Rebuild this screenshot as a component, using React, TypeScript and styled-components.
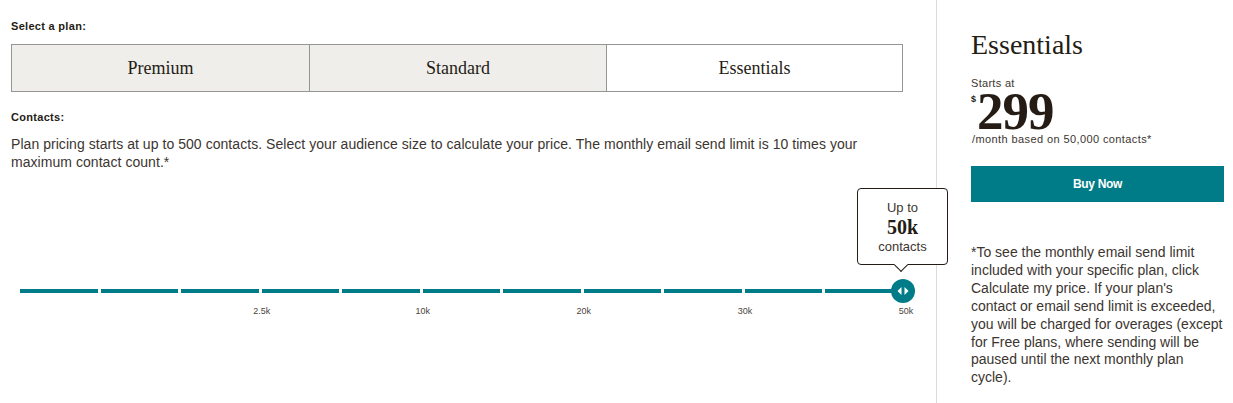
import React from "react";
import styled, { createGlobalStyle } from "styled-components";

const GlobalStyle = createGlobalStyle`
  body {
    margin: 0;
    background: #fff;
    color: #241c15;
    font-family: "Liberation Sans", Arial, sans-serif;
  }
`;

const teal = "#007c89";
const serif = `"Liberation Serif", "Times New Roman", serif`;

const Page = styled.div`
  display: flex;
  width: 1233px;
  height: 403px;
  overflow: hidden;
`;

const LeftColumn = styled.div`
  padding: 20px 0 0 11px;
  border-right: 1px solid #dedbd5;
  box-sizing: border-box;
  flex: 0 0 937px;
`;

const Label = styled.div`
  font-size: 11px;
  font-weight: 600;
  letter-spacing: 0.3px;
  margin-bottom: 12px;
`;

const Tabs = styled.div`
  display: grid;
  grid-template-columns: 297px 297px 1fr;
  width: 892px;
  height: 48px;
  border: 1px solid #959595;
  box-sizing: border-box;
`;

const Tab = styled.div<{ $active?: boolean; $first?: boolean }>`
  display: flex;
  align-items: center;
  justify-content: center;
  font-family: ${serif};
  font-size: 18px;
  background: ${(p) => (p.$active ? "#fff" : "#efeeea")};
  border-left: ${(p) => (p.$first ? "none" : "1px solid #959595")};
`;

const ContactsLabel = styled(Label)`
  margin-top: 19px;
  margin-bottom: 12px;
`;

const Description = styled.p`
  margin: 0;
  font-size: 14px;
  line-height: 18px;
  letter-spacing: 0.05px;
  width: 870px;
  color: #3c3530;
`;

const Slider = styled.div`
  position: relative;
  margin: 118px 0 0 9px;
  width: 883px;
`;

const Track = styled.div`
  display: flex;
  gap: 3px;
  height: 4px;
`;

const Segment = styled.div`
  flex: 1;
  background: ${teal};
`;

const Ticks = styled.div`
  display: flex;
  gap: 3px;
  margin-top: 13px;
  height: 14px;
`;

const Tick = styled.div`
  flex: 1;
  position: relative;
  font-size: 9px;
  color: #4a4540;
  span {
    position: absolute;
    right: -3px;
    transform: translateX(50%);
    top: 0;
  }
`;

const Knob = styled.div`
  position: absolute;
  right: -12px;
  top: -10px;
  width: 24px;
  height: 24px;
  border-radius: 50%;
  background: ${teal};
  display: flex;
  align-items: center;
  justify-content: center;
`;

const Bubble = styled.div`
  position: absolute;
  left: 837px;
  top: -101px;
  width: 91px;
  height: 77px;
  box-sizing: border-box;
  border: 1px solid #241c15;
  border-radius: 4px;
  background: #fff;
  display: flex;
  flex-direction: column;
  align-items: center;
  justify-content: center;
  font-size: 13px;
  line-height: 17px;
  color: #3c3530;
  &::after {
    content: "";
    position: absolute;
    left: 38px;
    bottom: -6px;
    width: 9px;
    height: 9px;
    background: #fff;
    border-right: 1px solid #241c15;
    border-bottom: 1px solid #241c15;
    transform: rotate(45deg);
  }
`;

const BubbleValue = styled.div`
  font-family: ${serif};
  font-weight: 700;
  font-size: 20px;
  line-height: 22px;
  color: #241c15;
`;

const RightColumn = styled.div`
  flex: 1;
  padding: 30px 0 0 34px;
`;

const PlanName = styled.h2`
  margin: 0;
  font-family: ${serif};
  font-weight: 400;
  font-size: 28px;
  line-height: 30px;
`;

const Small = styled.div`
  font-size: 11px;
  letter-spacing: 0.3px;
  color: #3c3530;
`;

const StartsAt = styled(Small)`
  margin-top: 17px;
  line-height: 13px;
`;

const Price = styled.div`
  display: flex;
  align-items: flex-start;
  height: 43px;
`;

const Dollar = styled.span`
  font-size: 9px;
  font-weight: 700;
  line-height: 10px;
  margin-top: 4px;
  margin-right: 1px;
`;

const Amount = styled.span`
  font-family: ${serif};
  font-weight: 700;
  font-size: 53px;
  line-height: 43px;
  letter-spacing: -1px;
`;

const PerMonth = styled(Small)`
  margin-left: 1px;
  line-height: 13px;
  letter-spacing: 0.4px;
`;

const BuyButton = styled.button`
  margin-top: 20px;
  width: 253px;
  height: 36px;
  border: none;
  background: ${teal};
  color: #fff;
  font-family: "Liberation Sans", Arial, sans-serif;
  font-weight: 700;
  font-size: 12px;
  letter-spacing: -0.3px;
  cursor: pointer;
`;

const Footnote = styled.p`
  margin: 42px 0 0;
  font-size: 14px;
  line-height: 17.9px;
  white-space: nowrap;
  color: #3c3530;
`;

const ticks = ["", "", "2.5k", "", "10k", "", "20k", "", "30k", "", "50k"];

const footnoteLines = [
  "*To see the monthly email send limit",
  "included with your specific plan, click",
  "Calculate my price. If your plan's",
  "contact or email send limit is exceeded,",
  "you will be charged for overages (except",
  "for Free plans, where sending will be",
  "paused until the next monthly plan",
  "cycle).",
];

export default function App() {
  return (
    <>
      <GlobalStyle />
      <Page>
        <LeftColumn>
          <Label>Select a plan:</Label>
          <Tabs>
            <Tab $first>Premium</Tab>
            <Tab>Standard</Tab>
            <Tab $active>Essentials</Tab>
          </Tabs>
          <ContactsLabel>Contacts:</ContactsLabel>
          <Description>
            Plan pricing starts at up to 500 contacts. Select your audience size to calculate your
            price. The monthly email send limit is 10 times your maximum contact count.*
          </Description>
          <Slider>
            <Bubble>
              <div>Up to</div>
              <BubbleValue>50k</BubbleValue>
              <div>contacts</div>
            </Bubble>
            <Track>
              {ticks.map((_, i) => (
                <Segment key={i} />
              ))}
            </Track>
            <Knob>
              <svg width="12" height="10" viewBox="0 0 12 10">
                <polygon points="4.5,1 4.5,9 0.5,5" fill="#fff" />
                <polygon points="7.5,1 7.5,9 11.5,5" fill="#fff" />
              </svg>
            </Knob>
            <Ticks>
              {ticks.map((t, i) => (
                <Tick key={i}>{t && <span>{t}</span>}</Tick>
              ))}
            </Ticks>
          </Slider>
        </LeftColumn>
        <RightColumn>
          <PlanName>Essentials</PlanName>
          <StartsAt>Starts at</StartsAt>
          <Price>
            <Dollar>$</Dollar>
            <Amount>299</Amount>
          </Price>
          <PerMonth>/month based on 50,000 contacts*</PerMonth>
          <BuyButton>Buy Now</BuyButton>
          <Footnote>
            {footnoteLines.map((line, i) => (
              <React.Fragment key={i}>
                {line}
                {i < footnoteLines.length - 1 && <br />}
              </React.Fragment>
            ))}
          </Footnote>
        </RightColumn>
      </Page>
    </>
  );
}
